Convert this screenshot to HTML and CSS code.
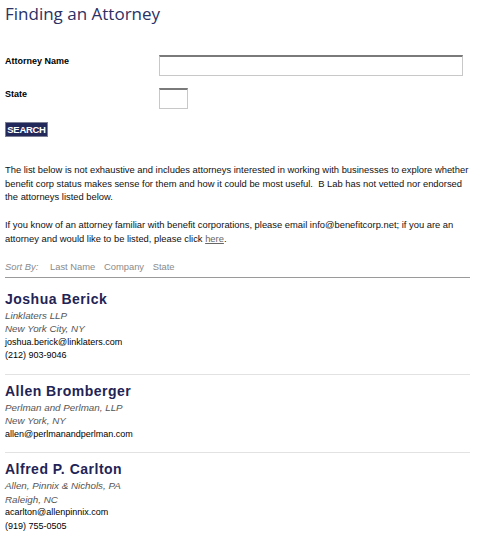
FILE: index.html
```html
<!DOCTYPE html>
<html lang="en">
<head>
    <meta charset="UTF-8">
    <title>Finding an Attorney</title>
    <link rel="stylesheet" href="styles.css">
</head>
<body>
    <div class="page">
        <h1 class="page-title">Finding an Attorney</h1>

        <!-- Search form -->
        <form class="search-form">
            <label class="field-label" for="attorneyName">Attorney Name</label>
            <input type="text" id="attorneyName" class="field-input name-input">
            <label class="field-label" for="state">State</label>
            <input type="text" id="state" class="field-input state-input">
        </form>
        <button class="search-button">SEARCH</button>

        <p class="intro">The list below is not exhaustive and includes attorneys interested in working with businesses to explore whether benefit corp status makes sense for them and how it could be most useful.&nbsp; B Lab has not vetted nor endorsed the attorneys listed below.</p>
        <p class="intro">If you know of an attorney familiar with benefit corporations, please email info@benefitcorp.net; if you are an attorney and would like to be listed, please click <a href="#">here</a>.</p>

        <!-- Sort bar -->
        <div class="sort-bar">
            <span class="sort-label">Sort By:</span>
            <a href="#">Last Name</a>
            <a href="#">Company</a>
            <a href="#">State</a>
        </div>

        <!-- Attorney list -->
        <div class="attorney first">
            <h2 class="attorney-name">Joshua Berick</h2>
            <div class="attorney-firm">Linklaters LLP</div>
            <div class="attorney-city">New York City, NY</div>
            <div class="attorney-contact">joshua.berick@linklaters.com</div>
            <div class="attorney-contact">(212) 903-9046</div>
        </div>
        <div class="attorney">
            <h2 class="attorney-name">Allen Bromberger</h2>
            <div class="attorney-firm">Perlman and Perlman, LLP</div>
            <div class="attorney-city">New York, NY</div>
            <div class="attorney-contact">allen@perlmanandperlman.com</div>
        </div>
        <div class="attorney last">
            <h2 class="attorney-name">Alfred P. Carlton</h2>
            <div class="attorney-firm">Allen, Pinnix &amp; Nichols, PA</div>
            <div class="attorney-city">Raleigh, NC</div>
            <div class="attorney-contact">acarlton@allenpinnix.com</div>
            <div class="attorney-contact">(919) 755-0505</div>
        </div>
    </div>
</body>
</html>
```

FILE: styles.css
```css
/* General page styling */
body {
    margin: 0;
    padding: 0;
    background-color: #ffffff;
    font-family: "Liberation Sans", Arial, sans-serif;
    color: #000;
}

.page {
    width: 470px;
    padding: 0 0 0 5px;
}

.page-title {
    margin: 0;
    padding-top: 3px;
    font-family: "Open Sans", "Liberation Sans", sans-serif;
    font-weight: normal;
    font-size: 17px;
    line-height: 22px;
    color: #2b3165;
}

/* Search form */
.search-form {
    display: grid;
    grid-template-columns: 154px auto;
    row-gap: 12px;
    align-items: start;
    margin-top: 30px;
}

.field-label {
    font-size: 9px;
    font-weight: bold;
    line-height: 12px;
}

.field-input {
    margin: 0;
    padding: 0;
    box-sizing: border-box;
    border: 1px solid #c8c8c8;
    border-top: 2px solid #7a7a7a;
    background: #fff;
    font-size: 10px;
}

.name-input {
    width: 304px;
    height: 21px;
}

.state-input {
    width: 29px;
    height: 21px;
}

.search-button {
    display: block;
    margin-top: 13px;
    padding: 0;
    height: 15px;
    width: 43px;
    background-color: #23285a;
    border: 1px solid #7d7f95;
    color: white;
    font-family: "Liberation Sans", Arial, sans-serif;
    font-size: 9.5px;
    font-weight: bold;
    line-height: 13px;
    letter-spacing: -0.3px;
    cursor: pointer;
}

.intro {
    margin: 26px 0 0 0;
    font-size: 9.4px;
    line-height: 13.5px;
    color: #111;
}

.intro + .intro {
    margin-top: 14.5px;
}

.intro a {
    color: #666;
}

/* Sort bar */
.sort-bar {
    margin-top: 14.5px;
    margin-right: 5px;
    padding-bottom: 4px;
    border-bottom: 1px solid #9a9a9a;
    font-size: 9.4px;
    line-height: 13px;
}

.sort-bar a,
.sort-label {
    color: #8a8a8a;
    text-decoration: none;
    margin-right: 6px;
}

.sort-label {
    font-style: italic;
    margin-right: 9px;
}

/* Attorney entries */
.attorney {
    margin-right: 5px;
    padding: 7px 0 11px 0;
    border-bottom: 1px solid #e2e2e2;
}

.attorney.first {
    padding-top: 12px;
}

.attorney.last {
    border-bottom: none;
}

.attorney-name {
    margin: 0;
    font-size: 14px;
    line-height: 19px;
    letter-spacing: 0.5px;
    color: #1f2456;
}

.attorney-firm,
.attorney-city {
    font-size: 9.8px;
    font-style: italic;
    line-height: 13.5px;
    color: #555;
}

.attorney-contact {
    font-size: 9px;
    line-height: 13.5px;
    color: #000;
}
```
